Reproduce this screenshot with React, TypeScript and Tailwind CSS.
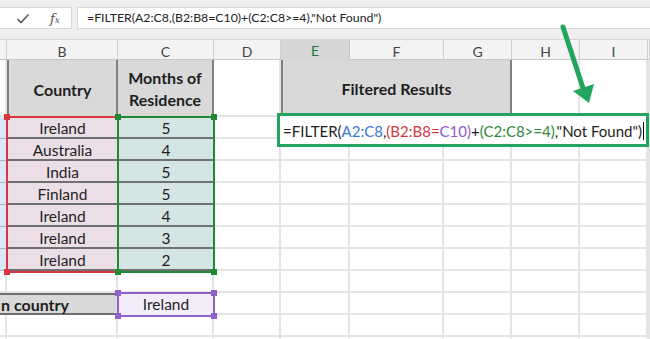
import React from "react";

const countries = ["Ireland", "Australia", "India", "Finland", "Ireland", "Ireland", "Ireland"];
const months = [5, 4, 5, 5, 4, 3, 2];
const letters = ["", "B", "C", "D", "E", "F", "G", "H", "I", ""];

const grid = "grid grid-cols-[7px_111px_96px_67px_69px_94px_68px_68px_68px_2px]";
const gl = "border-r-2 border-b-2 border-[#e4e4e4]";

function Corner({ x, y, color }: { x: number; y: number; color: string }) {
  return <div className={`absolute w-[6px] h-[6px] ${color}`} style={{ left: x - 3, top: y - 3 }} />;
}

export default function App() {
  return (
    <div className="relative w-[650px] h-[339px] overflow-hidden bg-white font-['Lato',sans-serif] text-[#1e1e1e]">
      {/* formula bar */}
      <div className="h-[40px] bg-[#efefef] pt-[7px] flex gap-[5px] border-b border-[#d6d6d6]">
        <div className="w-[72px] h-[22px] bg-white border-y border-r border-[#d8d8d8] flex items-center">
          <svg width="14" height="11" viewBox="0 0 14 11" className="ml-[16px]">
            <path d="M1.5 6 L5 9.5 L12.5 1.5" fill="none" stroke="#5a5a5a" strokeWidth="1.6" />
          </svg>
          <span className="ml-[20px] font-['DejaVu_Serif',serif] italic text-[13px] text-[#555] leading-none">
            f<span className="text-[9px]">x</span>
          </span>
        </div>
        <div className="flex-1 h-[22px] bg-white border-y border-l border-[#d8d8d8] flex items-center pl-[9px] text-[12.3px] text-[#222] whitespace-nowrap">
          =FILTER(A2:C8,(B2:B8=C10)+(C2:C8&gt;=4),"Not Found")
        </div>
      </div>

      {/* column headers */}
      <div className={`${grid} h-[20px] bg-[#f3f3f3] border-b border-[#c8c8c8]`}>
        {letters.map((l, i) => (
          <div
            key={i}
            className={`flex items-center justify-center text-[14px] ${
              l === "E"
                ? "bg-[#d6d6d6] border-b-2 border-[#217346] text-[#217346] border-r border-r-[#c8c8c8]"
                : "text-[#444] border-r border-[#d0d0d0]"
            }`}
          >
            {l}
          </div>
        ))}
      </div>

      {/* sheet */}
      <div className={`${grid} grid-rows-[57px_repeat(10,22px)_2px]`}>
        {/* row 1 */}
        <div className={gl} />
        <div className="bg-[#d9d9d9] border-x-2 border-b border-[#808080] flex items-center justify-center pt-[3px] font-bold text-[16px]">
          Country
        </div>
        <div className="bg-[#d9d9d9] border-r-2 border-b border-[#808080] flex flex-col items-center justify-center pt-[2px] font-bold text-[16px] leading-[22px]">
          <span>Months of</span>
          <span>Residence</span>
        </div>
        <div className={gl} />
        <div className="col-span-3 bg-[#d9d9d9] border-x-2 border-b-2 border-[#808080] flex items-center justify-center pt-[2px] font-bold text-[16px]">
          Filtered Results
        </div>
        <div className={gl} />
        <div className={gl} />
        <div className={gl} />

        {/* rows 2-8 */}
        {countries.map((c, i) => (
          <React.Fragment key={i}>
            <div className="bg-[#dde7f5] border-r border-b border-[#9fb6da]" />
            <div className="bg-[#ebdee6] border-b-2 border-[#707070] flex items-center justify-center pt-[3px] text-[15.5px]">
              {c}
            </div>
            <div className="bg-[#d5e5e3] border-b-2 border-[#707070] flex items-center justify-center pt-[3px] text-[15.5px]">
              {months[i]}
            </div>
            {Array.from({ length: 7 }).map((_, j) => (
              <div key={j} className={gl} />
            ))}
          </React.Fragment>
        ))}

        {/* row 9 */}
        {Array.from({ length: 10 }).map((_, j) => (
          <div key={j} className={gl} />
        ))}

        {/* row 10 */}
        <div className="col-span-2 bg-[#d9d9d9] border-y-2 border-[#6f6f6f] flex items-center pl-[1px] pt-[1px] font-bold text-[16px] whitespace-nowrap">
          n country
        </div>
        <div className="bg-[#f2edf9] flex items-center justify-center pt-[2px] text-[15.5px]">Ireland</div>
        {Array.from({ length: 7 }).map((_, j) => (
          <div key={j} className={gl} />
        ))}

        {/* row 11 */}
        {Array.from({ length: 10 }).map((_, j) => (
          <div key={j} className={gl} />
        ))}
        {Array.from({ length: 10 }).map((_, j) => (
          <div key={j} className="border-r-2 border-[#e4e4e4]" />
        ))}
      </div>

      {/* range highlights */}
      <div className="absolute left-[6px] top-[116px] w-[113px] h-[157px] border-2 border-[#d8363c]" />
      <div className="absolute left-[117px] top-[116px] w-[98px] h-[157px] border-2 border-[#1f8a35]" />
      <div className="absolute left-[117px] top-[292px] w-[98px] h-[25px] border-2 border-[#8d62cc]" />
      <Corner x={7} y={117} color="bg-[#d8363c]" />
      <Corner x={7} y={272} color="bg-[#d8363c]" />
      <Corner x={118} y={117} color="bg-[#1f8a35]" />
      <Corner x={214} y={117} color="bg-[#1f8a35]" />
      <Corner x={118} y={272} color="bg-[#1f8a35]" />
      <Corner x={214} y={272} color="bg-[#1f8a35]" />
      <Corner x={118} y={293} color="bg-[#8d62cc]" />
      <Corner x={214} y={293} color="bg-[#8d62cc]" />
      <Corner x={118} y={316} color="bg-[#8d62cc]" />
      <Corner x={214} y={316} color="bg-[#8d62cc]" />

      {/* in-cell formula editor */}
      <div className="absolute left-[277px] top-[113px] w-[372px] h-[34px] border-[3px] border-[#22a35f] bg-white flex items-center pl-[3px] pt-[2px] text-[15px] whitespace-nowrap">
        <span>=FILTER(</span>
        <span className="text-[#3a78d6]">A2:C8</span>
        <span>,</span>
        <span className="text-[#d0393f]">(B2:B8=</span>
        <span className="text-[#9257c9]">C10)</span>
        <span>+</span>
        <span className="text-[#2e8a3a]">(C2:C8&gt;=4)</span>
        <span>,"Not Found")</span>
        <span className="inline-block w-px h-[18px] bg-black ml-[1px]" />
      </div>

      {/* arrow */}
      <svg className="absolute left-0 top-0" width="650" height="339" viewBox="0 0 650 339">
        <line x1="563" y1="27" x2="583" y2="88" stroke="#22a55f" strokeWidth="5" strokeLinecap="round" />
        <polygon points="589,103 573,91 594,84" fill="#22a55f" />
      </svg>
    </div>
  );
}
